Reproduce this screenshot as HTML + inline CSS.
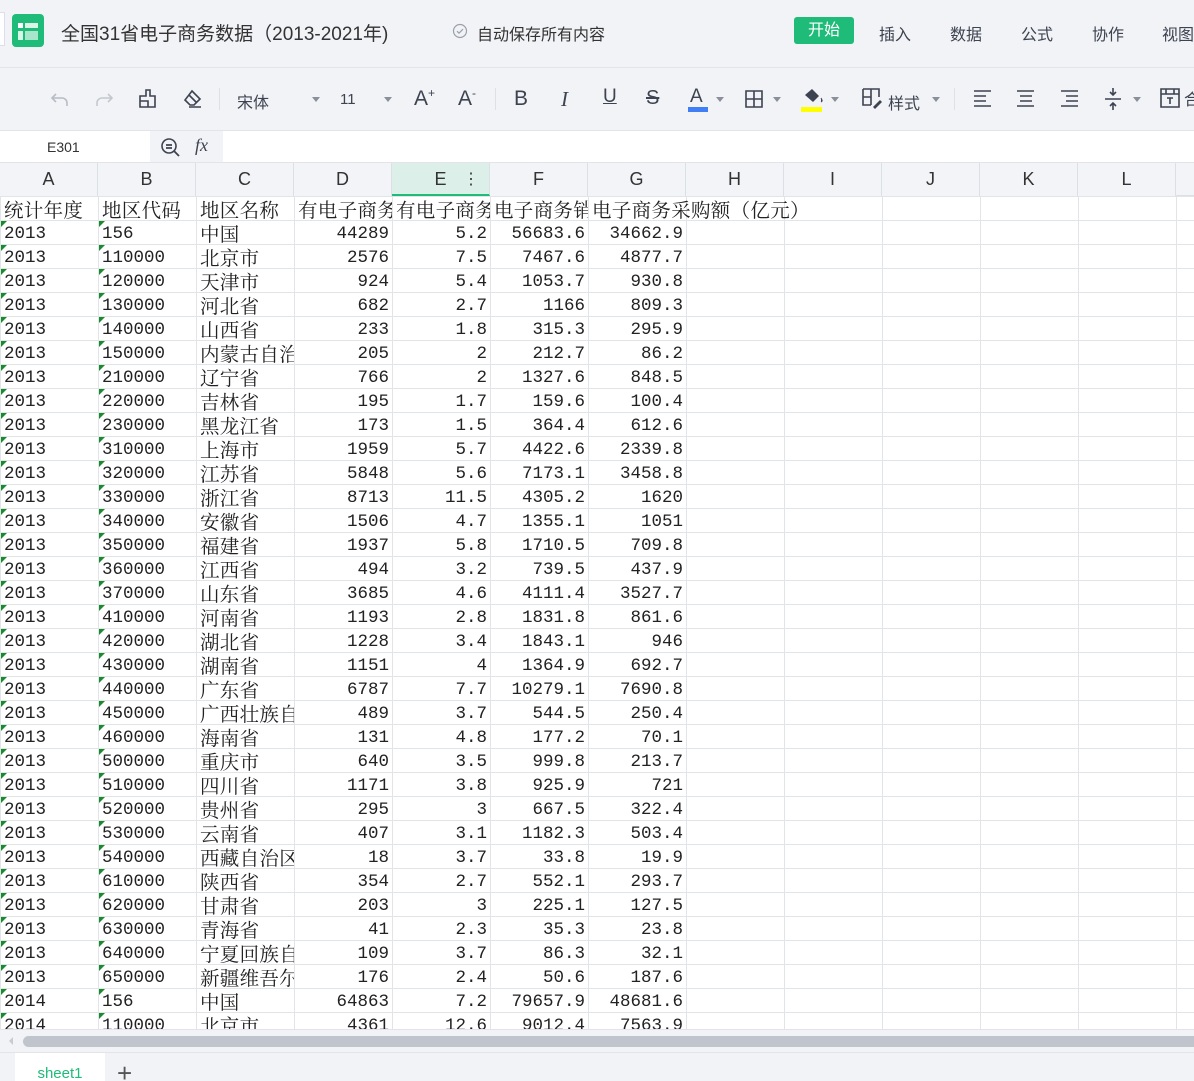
<!DOCTYPE html>
<html style="overflow:hidden;height:1081px"><head><meta charset="utf-8">
<style>
*{box-sizing:border-box;margin:0;padding:0}
body{width:1194px;height:1081px;overflow:hidden;background:#f2f3f7;font-family:"Liberation Sans","Noto Sans CJK SC",sans-serif;position:relative;color:#333}
.a{position:absolute}
.tb{color:#3d4350;font-size:16px}
.ic{position:absolute;top:88px}
table{border-collapse:collapse;table-layout:fixed;position:absolute;left:0;top:0;width:1274px;background:#fff}
tr{height:24px}
td{width:98px;height:24px;border:1px solid #e1e4e9;font-family:"Liberation Mono","Noto Serif CJK SC",serif;font-size:17.5px;color:#222;white-space:nowrap;overflow:hidden;padding:3px 3px 0 3px;line-height:20px;position:relative;vertical-align:top}
td .c{display:inline-block;height:20px;line-height:22px;position:relative;top:-2px;vertical-align:top;overflow:visible;font-size:19.5px;font-family:"Noto Serif CJK SC","Liberation Serif",serif;letter-spacing:0.3px}
td.r{text-align:right}
td.t::before{content:"";position:absolute;left:0;top:0;border-top:6px solid #1a8a2e;border-right:6px solid transparent}
.ch{position:absolute;top:163px;height:33px;width:98px;border-right:1px solid #dcdfe4;text-align:center;font-size:18px;line-height:33px;color:#333;background:#f3f4f7}
</style></head><body>
<div class="a" style="left:0;top:12px;width:5px;height:34px;background:#fff;border:1px solid #dde;border-left:none"></div>
<div class="a" style="left:12px;top:14px;width:32px;height:33px;border-radius:4px;background:#1fbb78">
 <div class="a" style="left:6px;top:9px;width:5px;height:5px;background:#fff"></div>
 <div class="a" style="left:13px;top:9px;width:13px;height:5px;background:#d8f5e8"></div>
 <div class="a" style="left:6px;top:17px;width:5px;height:9px;background:#d8f5e8"></div>
 <div class="a" style="left:13px;top:17px;width:13px;height:9px;background:#a8e6cb"></div>
</div>
<div class="a" style="left:61px;top:19px;font-size:19px;color:#333">全国31省电子商务数据（2013-2021年)</div>
<svg class="a" style="left:452px;top:23px" width="16" height="16"><circle cx="8" cy="8" r="6.5" fill="none" stroke="#9aa0aa" stroke-width="1.2"/><path d="M5 8.2l2 2 4-4" fill="none" stroke="#9aa0aa" stroke-width="1.2"/></svg>
<div class="a" style="left:477px;top:21px;font-size:16px;color:#333">自动保存所有内容</div>
<div class="a" style="left:794px;top:17px;width:60px;height:27px;background:#1fbb78;border-radius:3px;color:#fff;font-size:16px;text-align:center;line-height:27px">开始</div>
<div class="a tb" style="left:879px;top:21px">插入</div>
<div class="a tb" style="left:950px;top:21px">数据</div>
<div class="a tb" style="left:1021px;top:21px">公式</div>
<div class="a tb" style="left:1092px;top:21px">协作</div>
<div class="a tb" style="left:1162px;top:21px">视图</div>
<div class="a" style="left:0;top:67px;width:1194px;height:1px;background:#e2e4e9"></div>
<svg class="ic" style="left:50px" width="22" height="22"><path d="M6 6l-4 4 4 4M2 10h10a5 5 0 0 1 5 5v3" fill="none" stroke="#b8bcc4" stroke-width="1.6"/></svg>
<svg class="ic" style="left:92px" width="22" height="22"><path d="M16 6l4 4-4 4M20 10h-10a5 5 0 0 0-5 5v3" fill="none" stroke="#c4c8ce" stroke-width="1.6"/></svg>
<svg class="ic" style="left:137px" width="22" height="22"><path d="M9 2h4v6h5v11H3V8h6zM3 13h8v6" fill="none" stroke="#3d4350" stroke-width="1.6"/></svg>
<svg class="ic" style="left:181px" width="22" height="22"><path d="M11 3l8 8-6 6H9l-5-5zM8 7l8 8M8 19h12" fill="none" stroke="#3d4350" stroke-width="1.6"/></svg>
<div class="a" style="left:219px;top:88px;width:1px;height:22px;background:#dde0e5"></div>
<div class="a tb" style="left:237px;top:89px">宋体</div>
<div class="a" style="left:312px;top:97px;border:4px solid transparent;border-top:5px solid #8a8f99"></div>
<div class="a tb" style="left:340px;top:91px;font-size:15px">11</div>
<div class="a" style="left:384px;top:97px;border:4px solid transparent;border-top:5px solid #8a8f99"></div>
<div class="a tb" style="left:414px;top:86px;font-size:21px">A<sup style="font-size:12px">+</sup></div>
<div class="a tb" style="left:458px;top:86px;font-size:21px">A<sup style="font-size:12px">-</sup></div>
<div class="a" style="left:495px;top:88px;width:1px;height:22px;background:#dde0e5"></div>
<div class="a tb" style="left:514px;top:87px;font-size:21px">B</div>
<div class="a tb" style="left:561px;top:87px;font-size:21px;font-style:italic;font-family:'Liberation Serif',serif">I</div>
<div class="a tb" style="left:603px;top:86px;font-size:19px;text-decoration:underline">U</div>
<div class="a tb" style="left:646px;top:87px;font-size:20px;text-decoration:line-through">S</div>
<div class="a tb" style="left:690px;top:86px;font-size:19px">A</div>
<div class="a" style="left:688px;top:107px;width:20px;height:5px;background:#3f7ef4"></div>
<div class="a" style="left:716px;top:97px;border:4px solid transparent;border-top:5px solid #8a8f99"></div>
<svg class="ic" style="left:744px;top:89px" width="20" height="20"><path d="M2 2h16v16H2zM10 2v16M2 10h16" fill="none" stroke="#3d4350" stroke-width="1.6"/></svg>
<div class="a" style="left:773px;top:97px;border:4px solid transparent;border-top:5px solid #8a8f99"></div>
<svg class="ic" style="left:801px;top:86px" width="24" height="20"><path d="M4 9l7-6 7 7-6 6z" fill="#3d4350"/><path d="M20 12c1 2 2 3 0 4" fill="#3d4350" stroke="#3d4350"/></svg>
<div class="a" style="left:801px;top:107px;width:21px;height:5px;background:#ffff00"></div>
<div class="a" style="left:831px;top:97px;border:4px solid transparent;border-top:5px solid #8a8f99"></div>
<svg class="ic" style="left:862px;top:88px" width="22" height="22"><path d="M1 1h16v8M1 1v16h8M9 1v16M1 9h8" fill="none" stroke="#3d4350" stroke-width="1.6"/><path d="M11 19l7-7 2 2-7 7z" fill="#3d4350"/></svg>
<div class="a tb" style="left:888px;top:90px">样式</div>
<div class="a" style="left:932px;top:97px;border:4px solid transparent;border-top:5px solid #8a8f99"></div>
<div class="a" style="left:954px;top:88px;width:1px;height:22px;background:#dde0e5"></div>
<svg class="ic" style="left:973px;top:89px" width="20" height="20"><path d="M1 2h17M1 7h12M1 12h12M1 17h17" stroke="#3d4350" stroke-width="1.6"/></svg>
<svg class="ic" style="left:1016px;top:89px" width="20" height="20"><path d="M1 2h17M4 7h12M4 12h12M1 17h17" stroke="#3d4350" stroke-width="1.6"/></svg>
<svg class="ic" style="left:1060px;top:89px" width="20" height="20"><path d="M1 2h17M6 7h12M6 12h12M1 17h17" stroke="#3d4350" stroke-width="1.6"/></svg>
<svg class="ic" style="left:1103px;top:87px" width="20" height="24"><path d="M2 12h16M10 1v7M7 5l3 3 3-3M10 23v-7M7 19l3-3 3 3" fill="none" stroke="#3d4350" stroke-width="1.6"/></svg>
<div class="a" style="left:1133px;top:97px;border:4px solid transparent;border-top:5px solid #8a8f99"></div>
<svg class="ic" style="left:1160px;top:88px" width="34" height="22"><path d="M1 1h18v18H1zM1 6h18M6 1v5M14 1v5M7 10h6M10 10v6" fill="none" stroke="#3d4350" stroke-width="1.6"/><text x="24" y="17" font-size="16" fill="#3d4350" font-family="Noto Sans CJK SC">合</text></svg>
<div class="a" style="left:0;top:130px;width:1194px;height:33px;background:#f2f3f7;border-top:1px solid #e2e4e9"></div>
<div class="a" style="left:0;top:131px;width:150px;height:31px;background:#fff;font-size:14px;line-height:33px;padding-left:47px;color:#333">E301</div>
<svg class="a" style="left:160px;top:137px" width="22" height="22"><circle cx="9" cy="9" r="7" fill="none" stroke="#3d4350" stroke-width="1.6"/><path d="M6 8h6M6 11h6M14 14l5 5" stroke="#3d4350" stroke-width="1.8"/></svg>
<div class="a" style="left:195px;top:135px;font-family:'Liberation Serif',serif;font-style:italic;font-size:18px;color:#3d4350">fx</div>
<div class="a" style="left:223px;top:131px;width:971px;height:31px;background:#fff"></div>
<div class="a" style="left:0;top:162px;width:1194px;height:34px;background:#f3f4f7;border-top:1px solid #e2e4e9;border-bottom:1px solid #dcdfe4"></div>
<div class="ch" style="left:0">A</div><div class="ch" style="left:98px">B</div><div class="ch" style="left:196px">C</div><div class="ch" style="left:294px">D</div>
<div class="ch" style="left:392px;background:#dcefe8;border-bottom:2px solid #1fbb78;height:33px">E<span style="position:absolute;right:10px;font-size:16px">⋮</span></div>
<div class="ch" style="left:490px">F</div><div class="ch" style="left:588px">G</div><div class="ch" style="left:686px">H</div><div class="ch" style="left:784px">I</div><div class="ch" style="left:882px">J</div><div class="ch" style="left:980px">K</div><div class="ch" style="left:1078px">L</div>
<div class="a" style="left:0;top:196px;width:1194px;height:833px;overflow:hidden;background:#fff">
<table>
<colgroup><col style="width:98px"><col style="width:98px"><col style="width:98px"><col style="width:98px"><col style="width:98px"><col style="width:98px"><col style="width:98px"><col style="width:98px"><col style="width:98px"><col style="width:98px"><col style="width:98px"><col style="width:98px"><col style="width:98px"></colgroup>
<tbody id="b"></tbody>
</table>
</div>
<div class="a" style="left:0;top:1029px;width:1194px;height:23px;background:#f2f3f6;border-top:1px solid #e2e4e9"></div>
<div class="a" style="left:9px;top:1037px;border:4px solid transparent;border-right:4px solid #c8ccd2;border-left:none"></div>
<div class="a" style="left:23px;top:1036px;width:1180px;height:11px;border-radius:6px;background:#c0c5cd"></div>
<div class="a" style="left:0;top:1052px;width:1194px;height:1px;background:#e2e4e9"></div>
<div class="a" style="left:15px;top:1053px;width:90px;height:28px;background:#fff;color:#1fbb78;font-size:15px;text-align:center;line-height:42px">sheet1</div>
<div class="a" style="left:117px;top:1058px;font-size:26px;color:#555">+</div>
<script>
var d=[["156","中国","44289","5.2","56683.6","34662.9"],["110000","北京市","2576","7.5","7467.6","4877.7"],["120000","天津市","924","5.4","1053.7","930.8"],["130000","河北省","682","2.7","1166","809.3"],["140000","山西省","233","1.8","315.3","295.9"],["150000","内蒙古自治","205","2","212.7","86.2"],["210000","辽宁省","766","2","1327.6","848.5"],["220000","吉林省","195","1.7","159.6","100.4"],["230000","黑龙江省","173","1.5","364.4","612.6"],["310000","上海市","1959","5.7","4422.6","2339.8"],["320000","江苏省","5848","5.6","7173.1","3458.8"],["330000","浙江省","8713","11.5","4305.2","1620"],["340000","安徽省","1506","4.7","1355.1","1051"],["350000","福建省","1937","5.8","1710.5","709.8"],["360000","江西省","494","3.2","739.5","437.9"],["370000","山东省","3685","4.6","4111.4","3527.7"],["410000","河南省","1193","2.8","1831.8","861.6"],["420000","湖北省","1228","3.4","1843.1","946"],["430000","湖南省","1151","4","1364.9","692.7"],["440000","广东省","6787","7.7","10279.1","7690.8"],["450000","广西壮族自","489","3.7","544.5","250.4"],["460000","海南省","131","4.8","177.2","70.1"],["500000","重庆市","640","3.5","999.8","213.7"],["510000","四川省","1171","3.8","925.9","721"],["520000","贵州省","295","3","667.5","322.4"],["530000","云南省","407","3.1","1182.3","503.4"],["540000","西藏自治区","18","3.7","33.8","19.9"],["610000","陕西省","354","2.7","552.1","293.7"],["620000","甘肃省","203","3","225.1","127.5"],["630000","青海省","41","2.3","35.3","23.8"],["640000","宁夏回族自","109","3.7","86.3","32.1"],["650000","新疆维吾尔","176","2.4","50.6","187.6"]];
var E='<td></td><td></td><td></td><td></td><td></td><td></td>';
function c(s){return '<span class="c">'+s+'</span>';}
var h='<tr><td>'+c('统计年度')+'</td><td>'+c('地区代码')+'</td><td>'+c('地区名称')+'</td><td>'+c('有电子商务')+'</td><td>'+c('有电子商务')+'</td><td>'+c('电子商务销')+'</td><td style="overflow:visible">'+c('电子商务采购额（亿元）')+'</td>'+E+'</tr>';
function row(y,r){return '<tr><td class="t">'+y+'</td><td class="t">'+r[0]+'</td><td>'+c(r[1])+'</td><td class="r">'+r[2]+'</td><td class="r">'+r[3]+'</td><td class="r">'+r[4]+'</td><td class="r">'+r[5]+'</td>'+E+'</tr>';}
d.forEach(function(r){h+=row("2013",r)});
h+=row("2014",["156","中国","64863","7.2","79657.9","48681.6"]);
h+=row("2014",["110000","北京市","4361","12.6","9012.4","7563.9"]);
document.getElementById("b").innerHTML=h;
</script>
</body></html>
